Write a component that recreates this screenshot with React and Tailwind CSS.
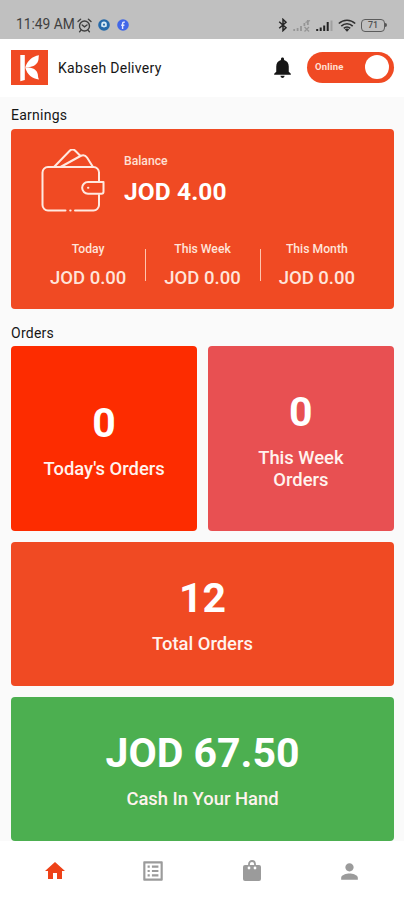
import { useState } from "react";
import { MdHome, MdListAlt, MdNotifications, MdPerson } from "react-icons/md";
import clsx from "clsx";

const EARNINGS = [
  { label: "Today", value: "JOD 0.00" },
  { label: "This Week", value: "JOD 0.00" },
  { label: "This Month", value: "JOD 0.00" },
];

function BagIcon({ className }) {
  return (
    <svg className={className} viewBox="0 0 24 24" fill="none">
      <path d="M5 6h14a2 2 0 0 1 2 2v12a2 2 0 0 1-2 2H5a2 2 0 0 1-2-2V8a2 2 0 0 1 2-2z" fill="currentColor" />
      <path d="M9 9V5a3 3 0 0 1 6 0v4" stroke="currentColor" strokeWidth="1.8" />
      <circle cx="9" cy="9" r="1.4" fill="#fff" />
      <circle cx="15" cy="9" r="1.4" fill="#fff" />
    </svg>
  );
}

const TABS = [
  { id: "home", icon: MdHome, size: "size-6" },
  { id: "orders", icon: MdListAlt, size: "size-[26px] -mt-px" },
  { id: "bag", icon: BagIcon, size: "size-6" },
  { id: "profile", icon: MdPerson, size: "size-[25px]" },
];

function StatusBar() {
  return (
    <div className="flex h-[39px] items-center justify-between bg-[#c0c0c0] pt-[11px] pr-[17px] pl-4 text-[#3f3f3f]">
      <div className="flex items-center">
        <span className="w-[61px] text-[13.8px] leading-none whitespace-nowrap">11:49 AM</span>
        <svg className="size-[15px]" viewBox="0 0 15 15" fill="none" stroke="currentColor" strokeWidth="1.4" strokeLinecap="round">
          <circle cx="7.5" cy="8" r="5" />
          <path d="M1 3.6 3.6 1.3M14 3.6 11.4 1.3M5.2 7l2.3 1.8L10 7M3.8 12.4l-1.2 1.3M11.2 12.4l1.2 1.3" />
        </svg>
        <svg className="ml-[6px] size-3" viewBox="0 0 12 12">
          <circle cx="6" cy="6" r="5.8" fill="#2569a9" />
          <path d="M3.2 7.5V5.4a2.8 2.8 0 0 1 5.6 0v2.1L6 8.6z" fill="#d6e9f5" />
          <circle cx="6" cy="5.7" r="1.1" fill="#2569a9" />
        </svg>
        <svg className="ml-[7px] size-3" viewBox="0 0 12 12">
          <circle cx="6" cy="6" r="5.8" fill="#4267e8" />
          <path d="M7.8 3.2c-1.5-.4-2.2.2-2.2 1.5V10M4.2 6.2h3.2" stroke="#e4e9ff" strokeWidth="1.4" fill="none" />
        </svg>
      </div>
      <div className="flex items-center">
        <svg className="h-[14px] w-[10px]" viewBox="0 0 10 14" fill="none" stroke="#262626" strokeWidth="1.5">
          <path d="M1.2 3.8 8 9.8 5 12.6V1.4l3 2.8-6.8 6" />
        </svg>
        <svg className="ml-[5px] h-[13px] w-[18px]" viewBox="0 0 18 13" fill="none" stroke="#959595" strokeWidth="1.8">
          <path d="M1.2 12v-2M4.6 12V9M8 12V7M11.4 7V4M14.8 6V1" />
          <path d="m11.5 8 4.5 4.5M16 8l-4.5 4.5M12.5 3.5l4.5-2" strokeWidth="1.3" />
        </svg>
        <svg className="ml-[5px] h-[13px] w-[17px]" viewBox="0 0 17 13" fill="none" stroke="#242424" strokeWidth="2">
          <path d="M1.2 12v-2M4.7 12V8.5M8.2 12V6.5M11.7 12V3" />
          <path d="M15.5 12V1.5" stroke="#a0a0a0" />
        </svg>
        <svg className="ml-[5px] h-[13px] w-[18px]" viewBox="0 0 18 13" fill="none" stroke="#303030" strokeWidth="1.6">
          <path d="M.8 4.5a11.8 11.8 0 0 1 16.4 0M3.3 7.1a8 8 0 0 1 11.4 0M5.8 9.4a4.6 4.6 0 0 1 6.4 0" />
          <path d="m9 12.8-2.2-2.2a3 3 0 0 1 4.4 0z" fill="#303030" stroke="none" />
        </svg>
        <div className="ml-[5px] flex items-center">
          <span className="flex h-[13px] w-6 items-center justify-center rounded-[4px] border border-[#5c5c5c] text-[9px] leading-none font-medium text-[#505050]">71</span>
          <span className="h-1 w-[2px] rounded-r-sm bg-[#555]" />
        </div>
      </div>
    </div>
  );
}

function Logo() {
  return (
    <svg className="h-[35px] w-[37px]" viewBox="0 0 37 35">
      <rect width="37" height="35" fill="#f04a23" />
      <path d="M9.3 5h4.5v25l-4.5 1.2z" fill="#fff" />
      <path d="M28 5.2c-.8 2.4.2 4-1.4 7-1.8 3-5.2 5-12.4 5.400 2.400-7.200 6.800-11.200 13.800-12.400z" fill="#fff" />
      <path d="M14.200 17.600c7.200-.2 10.600 1.800 12 4.900 1.200 2.600.4 4.600 1.800 7.100-7-.8-11.600-4.600-13.800-12z" fill="#fff" />
    </svg>
  );
}

function WalletIcon() {
  return (
    <svg className="h-[65px] w-[64px]" viewBox="0 0 64 65" fill="none" stroke="#ffe9e0" strokeWidth="2" strokeLinecap="round" strokeLinejoin="round">
      <path d="M24.5 61.5H7A5.5 5.5 0 0 1 1.5 56V23.500A5.500 5.500 0 0 1 7 18h45.500a5.500 5.500 0 0 1 5.500 5.500V33M58 46v10a5.500 5.500 0 0 1-5.500 5.500H34" />
      <path d="M29.200 61.500h.4" />
      <path d="M62.500 33H47a5.800 5.800 0 0 0 0 11.700h13.500a2 2 0 0 0 2-2z" />
      <path d="M47 38.800h.4" />
      <path d="M13 18 28.500 2q3-3 6 0l5 5M19.500 18 39.500 7q4-2.200 6.500 1.500l6 9.500" />
    </svg>
  );
}

function StatCard({ value, label, className }) {
  return (
    <div className={clsx("flex flex-col items-center justify-center gap-[10px] rounded-[4px] pt-px text-center text-white", className)}>
      <span className="text-[41px] leading-[49px] font-bold">{value}</span>
      <span className="text-[18.4px] leading-[22px] font-medium text-[#fff3ee]">{label}</span>
    </div>
  );
}

export default function App() {
  const [tab, setTab] = useState("home");
  const [online, setOnline] = useState(true);

  return (
    <div className="flex h-[900px] w-[404px] flex-col overflow-hidden bg-[#fafafa] font-[Roboto,sans-serif] text-[#242424]">
      <StatusBar />

      <header className="flex h-[58px] items-center bg-white pr-[10px] pb-[2px] pl-[11px]">
        <Logo />
        <h1 className="mt-px ml-[10px] text-[14px] leading-5 tracking-[0.3px] text-[#161616]">Kabseh Delivery</h1>
        <MdNotifications className="ml-auto size-[25px] text-[#161616]" />
        <button
          type="button"
          onClick={() => setOnline(!online)}
          className="ml-[12px] flex h-[31px] w-[87px] items-center justify-between rounded-full bg-[#f04a23] pr-[5px] pl-2"
        >
          <span className="text-[9.5px] font-bold tracking-[0.2px] text-[#ffe0d5]">{online ? "Online" : "Offline"}</span>
          <span className="size-6 rounded-full bg-white" />
        </button>
      </header>

      <main className="flex h-[744px] flex-col pr-[10px] pl-[11px]">
        <h2 className="mt-[8px] text-[14px] leading-5 tracking-[0.25px] text-[#161616]">Earnings</h2>
        <section className="mt-[3.5px] h-[180px] rounded-[4px] bg-[#f04a23] px-5 pt-5 text-white">
          <div className="flex h-[65px] pl-[10px]">
            <WalletIcon />
            <div className="ml-[19px] flex flex-col">
              <span className="mt-[4px] text-[12.2px] leading-4 font-medium text-[#ffe0d5]">Balance</span>
              <span className="mt-[9px] text-[24.5px] leading-7 font-bold tracking-[0.1px]">JOD 4.00</span>
            </div>
          </div>
          <div className="mt-[27px] flex items-center">
            {EARNINGS.map((e, i) => (
              <div key={e.label} className="flex flex-1 items-center">
                {i > 0 && <div className="-mr-px h-8 w-px bg-[#ffc4ae]" />}
                <div className="flex flex-1 flex-col items-center text-[#ffe4da]">
                  <span className="text-[12.2px] leading-4 font-medium">{e.label}</span>
                  <span className="mt-[10px] text-[18.5px] leading-[22px] font-medium">{e.value}</span>
                </div>
              </div>
            ))}
          </div>
        </section>

        <h2 className="mt-[14px] text-[14px] leading-5 tracking-[0.25px] text-[#161616]">Orders</h2>
        <div className="mt-[3.5px] grid grid-cols-2 gap-[10.5px]">
          <StatCard value="0" label="Today's Orders" className="h-[185px] bg-[#fd2c00]" />
          <StatCard value="0" label="This Week Orders" className="h-[185px] bg-[#e85052] px-10" />
        </div>
        <StatCard value="12" label="Total Orders" className="mt-[10.5px] h-[144px] bg-[#f04a23]" />
        <StatCard value="JOD 67.50" label="Cash In Your Hand" className="mt-[11px] h-[144px] bg-[#4caf50]" />
      </main>

      <nav className="grid flex-1 grid-cols-4 bg-white pr-[5px] pl-[6px]">
        {TABS.map(({ id, icon: Icon, size }) => (
          <button
            key={id}
            type="button"
            onClick={() => setTab(id)}
            className={clsx("flex items-start justify-center pt-[18px]", tab === id ? "text-[#ee4218]" : "text-[#9b9b9b]")}
          >
            <Icon className={size} />
          </button>
        ))}
      </nav>
    </div>
  );
}
